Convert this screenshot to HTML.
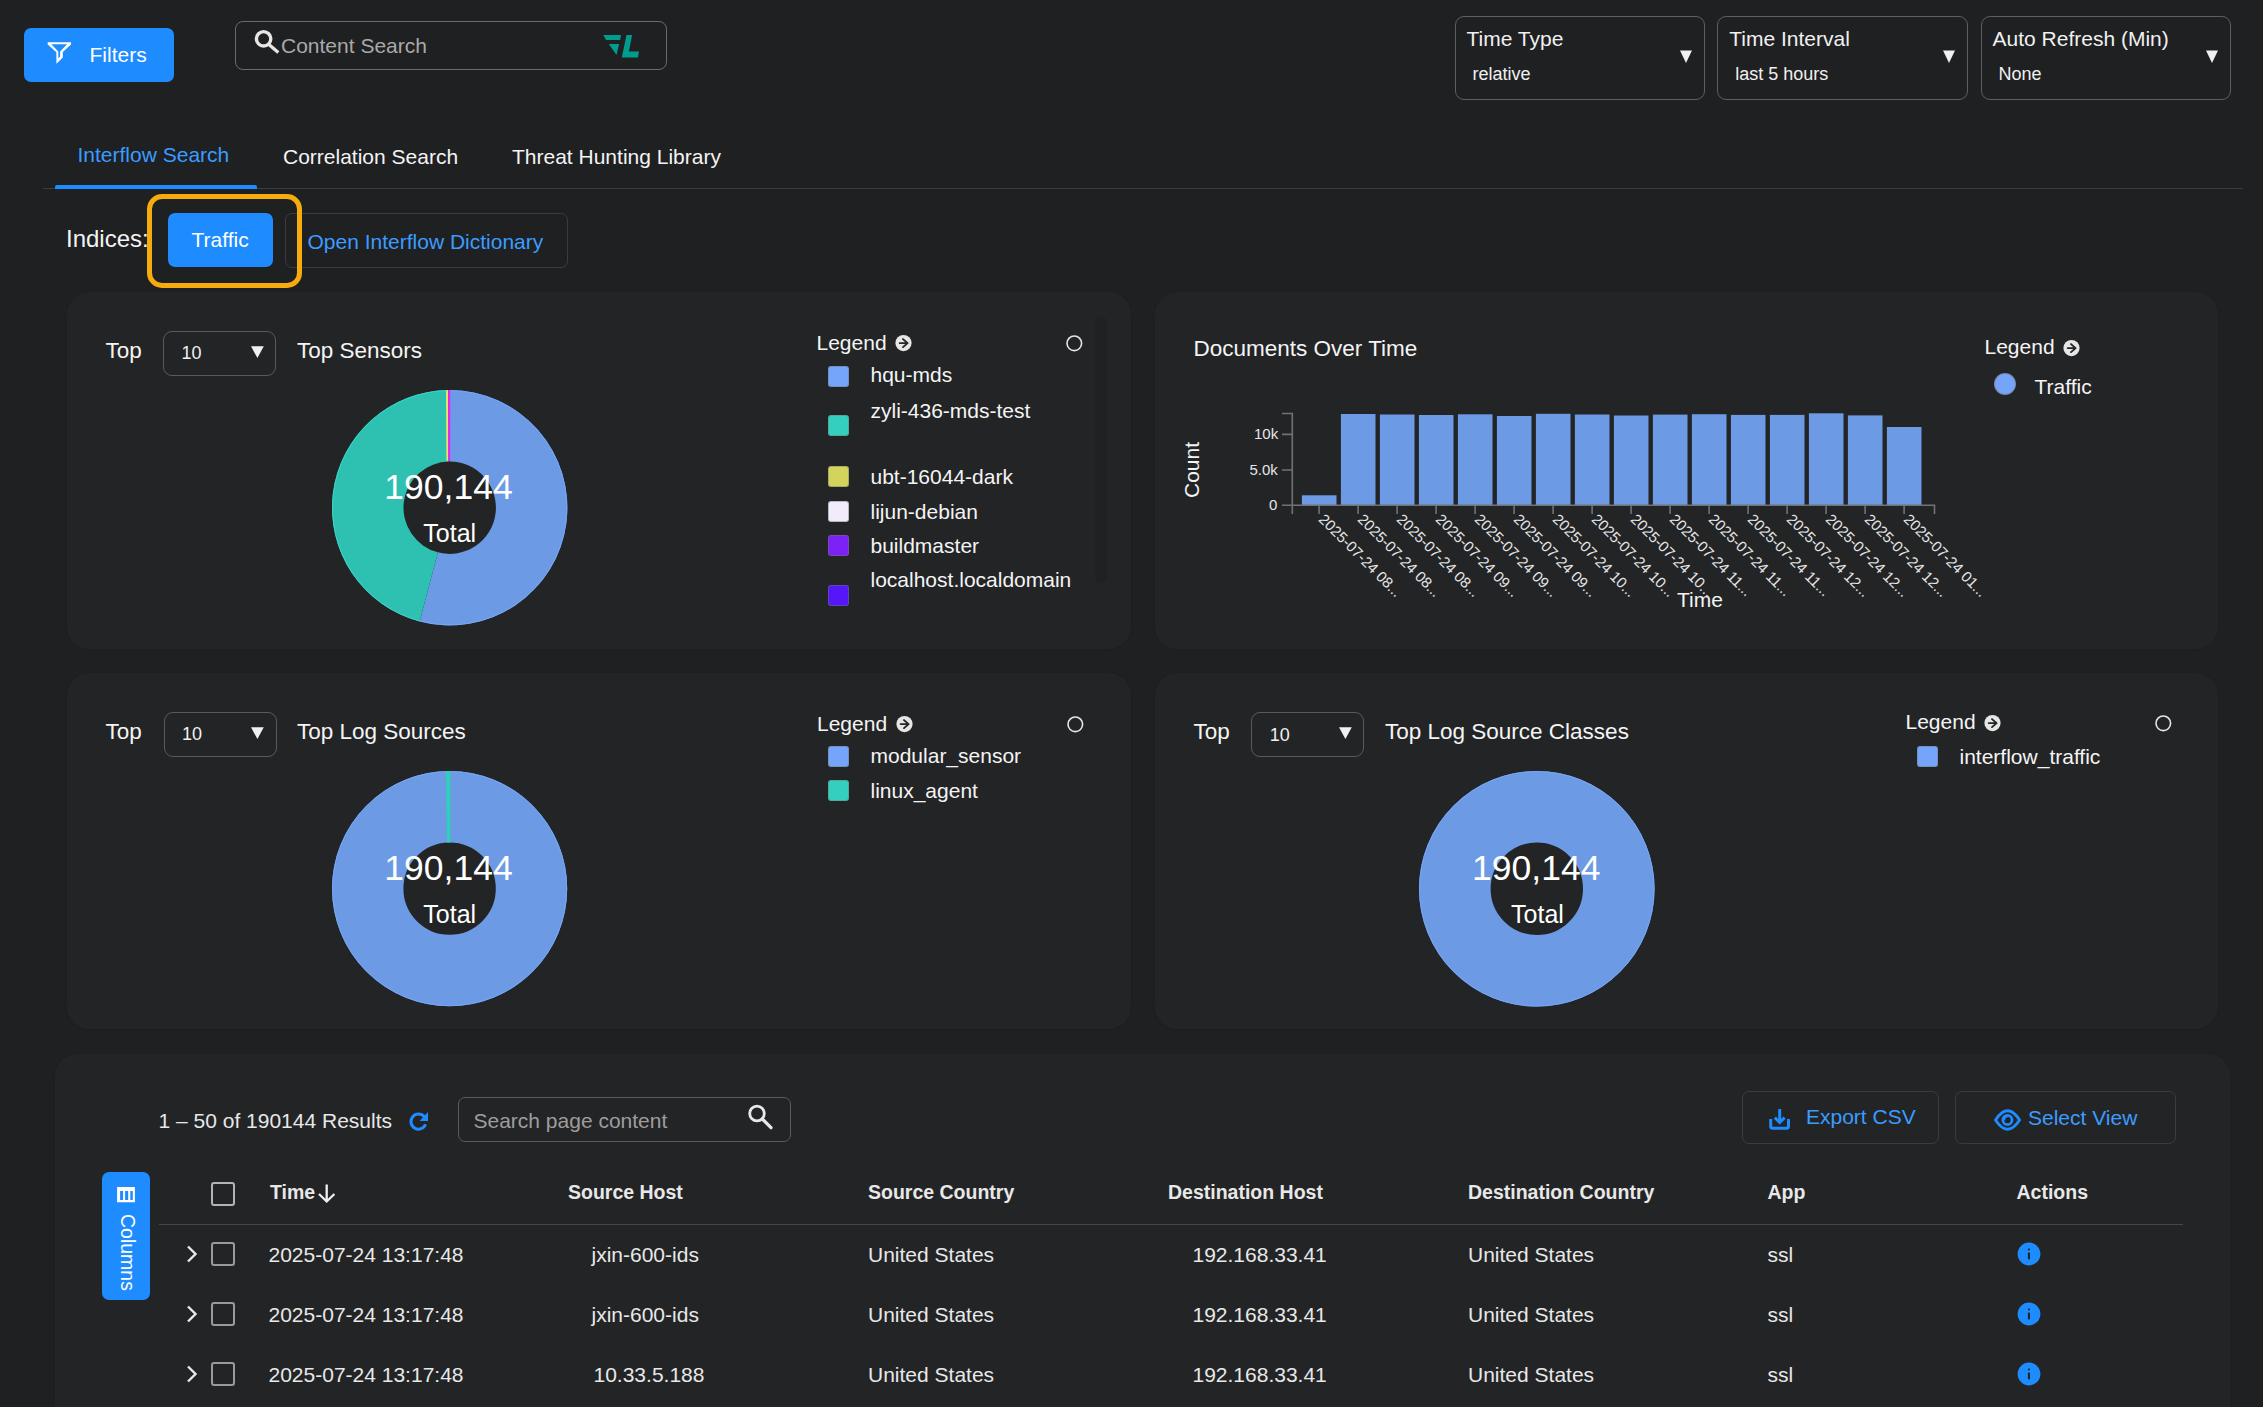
<!DOCTYPE html>
<html><head><meta charset="utf-8"><style>
html,body{margin:0;padding:0;background:#1f2022;}
#root{position:relative;width:2263px;height:1407px;overflow:hidden;background:#1f2022;font-family:"Liberation Sans",sans-serif;}
.t{position:absolute;line-height:1;white-space:nowrap;}
</style></head><body><div id="root">
<div style="position:absolute;left:24px;top:28px;width:150px;height:54px;box-sizing:border-box;background:#1e8bff;border-radius:7px"></div><svg style="position:absolute;left:0;top:0" width="2263" height="120"><path fill-rule="evenodd" fill="#fff" d="M47.7,42.2 H71 V44.5 L62.8,52 V57.5 L56.4,63.8 V52.2 L47.7,44.6 Z M51.3,44.2 H67.1 L60.1,51.4 V56.5 L58.3,58.2 V51.4 Z"/></svg><div class="t" style="left:89.5px;top:44.0px;font-size:21px;color:#ffffff;font-weight:400;">Filters</div><div style="position:absolute;left:235px;top:21px;width:432px;height:49px;box-sizing:border-box;border:1.5px solid #6b6b6b;border-radius:8px"></div><svg style="position:absolute;left:240px;top:20px" width="50" height="40"><circle cx="23.6" cy="18.8" r="7.2" fill="none" stroke="#e6e6e6" stroke-width="3.4"/><line x1="28.6" y1="24.3" x2="38.3" y2="32.5" stroke="#e6e6e6" stroke-width="3.3"/></svg><div class="t" style="left:281.0px;top:34.6px;font-size:21px;color:#a9a9a9;font-weight:400;">Content Search</div><svg style="position:absolute;left:0;top:0" width="700" height="80"><path d="M603.2,35 L621,35 L620.2,40 L606.1,40 Z" fill="#009d8f"/><path d="M608.8,43.9 L619.1,43.9 L616.5,55 Z" fill="#009d8f"/><path d="M626.5,35 L632.1,35 L628.9,51.6 L639,51.6 L637.9,57.4 L621.8,57.4 Z" fill="#009d8f"/></svg><div style="position:absolute;left:1454.5px;top:16.4px;width:250.5px;height:83.6px;box-sizing:border-box;border:1.5px solid #5f5f5f;border-radius:9px"></div><div class="t" style="left:1466.5px;top:27.5px;font-size:21px;color:#f0f0f0;font-weight:400;">Time Type</div><div class="t" style="left:1472.5px;top:65.4px;font-size:18px;color:#f0f0f0;font-weight:400;">relative</div><svg style="position:absolute;left:1680.0px;top:50px" width="13" height="14"><path d="M0,0.5 L12,0.5 L6,13 Z" fill="#f0f0f0"/></svg><div style="position:absolute;left:1717.3px;top:16.4px;width:250.5px;height:83.6px;box-sizing:border-box;border:1.5px solid #5f5f5f;border-radius:9px"></div><div class="t" style="left:1729.3px;top:27.5px;font-size:21px;color:#f0f0f0;font-weight:400;">Time Interval</div><div class="t" style="left:1735.3px;top:65.4px;font-size:18px;color:#f0f0f0;font-weight:400;">last 5 hours</div><svg style="position:absolute;left:1942.8px;top:50px" width="13" height="14"><path d="M0,0.5 L12,0.5 L6,13 Z" fill="#f0f0f0"/></svg><div style="position:absolute;left:1980.5px;top:16.4px;width:250.5px;height:83.6px;box-sizing:border-box;border:1.5px solid #5f5f5f;border-radius:9px"></div><div class="t" style="left:1992.5px;top:27.5px;font-size:21px;color:#f0f0f0;font-weight:400;">Auto Refresh (Min)</div><div class="t" style="left:1998.5px;top:65.4px;font-size:18px;color:#f0f0f0;font-weight:400;">None</div><svg style="position:absolute;left:2206.0px;top:50px" width="13" height="14"><path d="M0,0.5 L12,0.5 L6,13 Z" fill="#f0f0f0"/></svg><div class="t" style="left:77.5px;top:144.4px;font-size:21px;color:#3b9cff;font-weight:400;">Interflow Search</div><div class="t" style="left:283.0px;top:146.0px;font-size:21px;color:#f4f4f4;font-weight:400;">Correlation Search</div><div class="t" style="left:512.0px;top:146.0px;font-size:21px;color:#f4f4f4;font-weight:400;">Threat Hunting Library</div><div style="position:absolute;left:43px;top:188px;width:2200px;height:1px;box-sizing:border-box;background:#3a3b3d"></div><div style="position:absolute;left:55px;top:185px;width:202px;height:4px;box-sizing:border-box;background:#1e8bff;border-radius:2px 2px 0 0"></div><div class="t" style="left:66.0px;top:227.4px;font-size:24px;color:#f4f4f4;font-weight:400;">Indices:</div><div style="position:absolute;left:168px;top:213px;width:105px;height:54px;box-sizing:border-box;background:#1e8bff;border-radius:7px"></div><div class="t" style="left:191.5px;top:229.3px;font-size:21px;color:#ffffff;font-weight:400;">Traffic</div><div style="position:absolute;left:285px;top:213px;width:283px;height:55px;box-sizing:border-box;border:1.5px solid #3b3c3e;border-radius:7px"></div><div class="t" style="left:307.5px;top:231.0px;font-size:21px;color:#3b9cff;font-weight:400;">Open Interflow Dictionary</div><div style="position:absolute;left:147px;top:194px;width:155px;height:94px;box-sizing:border-box;border:5px solid #f6ab0e;border-radius:15px"></div><div style="position:absolute;left:67px;top:292px;width:1064px;height:357px;box-sizing:border-box;background:#232426;border-radius:22px;box-shadow:0 0 2px rgba(0,0,0,0.12)"></div><div style="position:absolute;left:1155px;top:292px;width:1063px;height:357px;box-sizing:border-box;background:#232426;border-radius:22px;box-shadow:0 0 2px rgba(0,0,0,0.12)"></div><div style="position:absolute;left:67px;top:673px;width:1064px;height:356px;box-sizing:border-box;background:#232426;border-radius:22px;box-shadow:0 0 2px rgba(0,0,0,0.12)"></div><div style="position:absolute;left:1155px;top:673px;width:1063px;height:356px;box-sizing:border-box;background:#232426;border-radius:22px;box-shadow:0 0 2px rgba(0,0,0,0.12)"></div><div style="position:absolute;left:55px;top:1054px;width:2175px;height:446px;box-sizing:border-box;background:#232426;border-radius:22px;box-shadow:0 0 2px rgba(0,0,0,0.12)"></div><div class="t" style="left:105.5px;top:340.0px;font-size:22.5px;color:#f4f4f4;font-weight:400;">Top</div><div style="position:absolute;left:163px;top:331px;width:113px;height:45px;box-sizing:border-box;border:1.5px solid #5a5a5a;border-radius:9px"></div><div class="t" style="left:181.5px;top:344.2px;font-size:18px;color:#f0f0f0;font-weight:400;">10</div><svg style="position:absolute;left:250.5px;top:345.8px" width="13" height="13"><path d="M0,0.3 L12.8,0.3 L6.4,12 Z" fill="#f0f0f0"/></svg><div class="t" style="left:297.0px;top:340.0px;font-size:22.5px;color:#f4f4f4;font-weight:400;">Top Sensors</div><svg style="position:absolute;left:329.6px;top:387.9px" width="239" height="239"><path d="M119.70,2.00 A117.7,117.7 0 1 1 89.63,233.50 L107.90,164.37 A46.2,46.2 0 1 0 119.70,73.50 Z" fill="#6c9ae4"/><path d="M119.70,2.50 A117.2,117.2 0 1 1 89.76,233.01" fill="none" stroke="#76a6f8" stroke-width="1"/><path d="M89.63,233.50 A117.7,117.7 0 0 1 118.26,2.01 L119.14,73.50 A46.2,46.2 0 0 0 107.90,164.37 Z" fill="#2ec1b2"/><path d="M89.76,233.01 A117.2,117.2 0 0 1 118.27,2.51" fill="none" stroke="#3ad6c6" stroke-width="1"/></svg><div class="t" style="left:384.3px;top:469.7px;font-size:35.5px;color:#ffffff;font-weight:400;">190,144</div><div class="t" style="left:423.3px;top:520.7px;font-size:25px;color:#ffffff;font-weight:400;">Total</div><svg style="position:absolute;left:0;top:0" width="600" height="900"><path d="M446,390.3 H448.1 V460.8 H446.4 Z" fill="#e4e46a"/><path d="M448.1,390.1 H450.2 V460.8 H448.1 Z" fill="#ee22f2"/></svg><div class="t" style="left:816.5px;top:331.5px;font-size:21px;color:#f4f4f4;font-weight:400;">Legend</div><svg style="position:absolute;left:895.0px;top:334.8px" width="20" height="20"><circle cx="8.5" cy="8.1" r="8.1" fill="#e6e6e6"/><path d="M4.7,8.1 H12.3 M8,4.1 L12.6,8.1 L8,12.1" fill="none" stroke="#232426" stroke-width="1.9" stroke-linecap="round" stroke-linejoin="round"/></svg><svg style="position:absolute;left:1066.0px;top:334.9px" width="18" height="18"><circle cx="8.3" cy="8.3" r="7.3" fill="none" stroke="#e6e6e6" stroke-width="1.6"/></svg><div style="position:absolute;left:1095px;top:316px;width:12px;height:267px;background:#202123;border-radius:6px"></div><div style="position:absolute;left:828.3px;top:365.7px;width:21.0px;height:21.0px;box-sizing:border-box;background:#74a5fb;border-radius:3px;border:1px solid rgba(120,120,120,0.45)"></div><div class="t" style="left:870.5px;top:364.4px;font-size:21px;color:#f4f4f4;font-weight:400;">hqu-mds</div><div style="position:absolute;left:828.3px;top:415.4px;width:21.0px;height:21.0px;box-sizing:border-box;background:#33d0c0;border-radius:3px;border:1px solid rgba(120,120,120,0.45)"></div><div class="t" style="left:870.5px;top:399.6px;font-size:21px;color:#f4f4f4;font-weight:400;">zyli-436-mds-test</div><div style="position:absolute;left:828.3px;top:465.9px;width:21.0px;height:21.0px;box-sizing:border-box;background:#d4d35c;border-radius:3px;border:1px solid rgba(120,120,120,0.45)"></div><div class="t" style="left:870.5px;top:466.3px;font-size:21px;color:#f4f4f4;font-weight:400;">ubt-16044-dark</div><div style="position:absolute;left:828.3px;top:500.7px;width:21.0px;height:21.000000000000057px;box-sizing:border-box;background:#f2ebfb;border-radius:3px;border:1px solid rgba(120,120,120,0.45)"></div><div class="t" style="left:870.5px;top:500.7px;font-size:21px;color:#f4f4f4;font-weight:400;">lijun-debian</div><div style="position:absolute;left:828.3px;top:534.8000000000001px;width:21.0px;height:21.0px;box-sizing:border-box;background:#7c22f6;border-radius:3px;border:1px solid rgba(120,120,120,0.45)"></div><div class="t" style="left:870.5px;top:534.7px;font-size:21px;color:#f4f4f4;font-weight:400;">buildmaster</div><div style="position:absolute;left:828.3px;top:584.6px;width:21.0px;height:21.0px;box-sizing:border-box;background:#5516f8;border-radius:3px;border:1px solid rgba(120,120,120,0.45)"></div><div class="t" style="left:870.5px;top:568.8px;font-size:21px;color:#f4f4f4;font-weight:400;">localhost.localdomain</div><div class="t" style="left:1193.5px;top:338.0px;font-size:22.5px;color:#f4f4f4;font-weight:400;">Documents Over Time</div><div class="t" style="left:1984.5px;top:336.3px;font-size:21px;color:#f4f4f4;font-weight:400;">Legend</div><svg style="position:absolute;left:2063.0px;top:339.6px" width="20" height="20"><circle cx="8.5" cy="8.1" r="8.1" fill="#e6e6e6"/><path d="M4.7,8.1 H12.3 M8,4.1 L12.6,8.1 L8,12.1" fill="none" stroke="#232426" stroke-width="1.9" stroke-linecap="round" stroke-linejoin="round"/></svg><div style="position:absolute;left:1994.3px;top:372.5px;width:22px;height:22px;border-radius:50%;background:#74a5fb;box-sizing:border-box;border:1px solid rgba(120,120,120,0.6)"></div><div class="t" style="left:2034.5px;top:376.0px;font-size:21px;color:#f4f4f4;font-weight:400;">Traffic</div><svg style="position:absolute;left:0;top:0" width="2263" height="649"><rect x="1301.90" y="495.3" width="34.6" height="10.00" fill="#6c9ae4"/><rect x="1340.90" y="414.0" width="34.6" height="91.30" fill="#6c9ae4"/><rect x="1379.90" y="414.5" width="34.6" height="90.80" fill="#6c9ae4"/><rect x="1418.90" y="415.0" width="34.6" height="90.30" fill="#6c9ae4"/><rect x="1457.90" y="414.3" width="34.6" height="91.00" fill="#6c9ae4"/><rect x="1496.90" y="416.0" width="34.6" height="89.30" fill="#6c9ae4"/><rect x="1535.90" y="413.8" width="34.6" height="91.50" fill="#6c9ae4"/><rect x="1574.90" y="414.5" width="34.6" height="90.80" fill="#6c9ae4"/><rect x="1613.90" y="415.5" width="34.6" height="89.80" fill="#6c9ae4"/><rect x="1652.90" y="414.6" width="34.6" height="90.70" fill="#6c9ae4"/><rect x="1691.90" y="414.2" width="34.6" height="91.10" fill="#6c9ae4"/><rect x="1730.90" y="414.9" width="34.6" height="90.40" fill="#6c9ae4"/><rect x="1769.90" y="414.9" width="34.6" height="90.40" fill="#6c9ae4"/><rect x="1808.90" y="413.3" width="34.6" height="92.00" fill="#6c9ae4"/><rect x="1847.90" y="415.4" width="34.6" height="89.90" fill="#6c9ae4"/><rect x="1886.90" y="427.0" width="34.6" height="78.30" fill="#6c9ae4"/><path d="M1282,413.5 H1292.3 V514 M1292.3,505.3 H1934.5 V514" fill="none" stroke="#727272" stroke-width="1.6"/><path d="M1282,434.4 H1292 M1282,470 H1292 M1282,505.3 H1292" fill="none" stroke="#727272" stroke-width="1.6"/><line x1="1319.10" y1="505" x2="1319.10" y2="514" stroke="#727272" stroke-width="1.6"/><line x1="1358.10" y1="505" x2="1358.10" y2="514" stroke="#727272" stroke-width="1.6"/><line x1="1397.10" y1="505" x2="1397.10" y2="514" stroke="#727272" stroke-width="1.6"/><line x1="1436.10" y1="505" x2="1436.10" y2="514" stroke="#727272" stroke-width="1.6"/><line x1="1475.10" y1="505" x2="1475.10" y2="514" stroke="#727272" stroke-width="1.6"/><line x1="1514.10" y1="505" x2="1514.10" y2="514" stroke="#727272" stroke-width="1.6"/><line x1="1553.10" y1="505" x2="1553.10" y2="514" stroke="#727272" stroke-width="1.6"/><line x1="1592.10" y1="505" x2="1592.10" y2="514" stroke="#727272" stroke-width="1.6"/><line x1="1631.10" y1="505" x2="1631.10" y2="514" stroke="#727272" stroke-width="1.6"/><line x1="1670.10" y1="505" x2="1670.10" y2="514" stroke="#727272" stroke-width="1.6"/><line x1="1709.10" y1="505" x2="1709.10" y2="514" stroke="#727272" stroke-width="1.6"/><line x1="1748.10" y1="505" x2="1748.10" y2="514" stroke="#727272" stroke-width="1.6"/><line x1="1787.10" y1="505" x2="1787.10" y2="514" stroke="#727272" stroke-width="1.6"/><line x1="1826.10" y1="505" x2="1826.10" y2="514" stroke="#727272" stroke-width="1.6"/><line x1="1865.10" y1="505" x2="1865.10" y2="514" stroke="#727272" stroke-width="1.6"/><line x1="1904.10" y1="505" x2="1904.10" y2="514" stroke="#727272" stroke-width="1.6"/></svg><div class="t" style="left:1254.0px;top:426.1px;font-size:15px;color:#e6e6e6;font-weight:400;">10k</div><div class="t" style="left:1249.5px;top:461.6px;font-size:15px;color:#e6e6e6;font-weight:400;">5.0k</div><div class="t" style="left:1269.0px;top:497.1px;font-size:15px;color:#e6e6e6;font-weight:400;">0</div><div class="t" style="left:1180.5px;top:498px;font-size:21px;color:#f4f4f4;transform:rotate(-90deg);transform-origin:0 0">Count</div><div class="t" style="left:1327.1px;top:510.7px;font-size:15px;color:#e6e6e6;transform:rotate(45deg);transform-origin:0 0">2025-07-24 08...</div><div class="t" style="left:1366.1px;top:510.7px;font-size:15px;color:#e6e6e6;transform:rotate(45deg);transform-origin:0 0">2025-07-24 08...</div><div class="t" style="left:1405.1px;top:510.7px;font-size:15px;color:#e6e6e6;transform:rotate(45deg);transform-origin:0 0">2025-07-24 08...</div><div class="t" style="left:1444.1px;top:510.7px;font-size:15px;color:#e6e6e6;transform:rotate(45deg);transform-origin:0 0">2025-07-24 09...</div><div class="t" style="left:1483.1px;top:510.7px;font-size:15px;color:#e6e6e6;transform:rotate(45deg);transform-origin:0 0">2025-07-24 09...</div><div class="t" style="left:1522.1px;top:510.7px;font-size:15px;color:#e6e6e6;transform:rotate(45deg);transform-origin:0 0">2025-07-24 09...</div><div class="t" style="left:1561.1px;top:510.7px;font-size:15px;color:#e6e6e6;transform:rotate(45deg);transform-origin:0 0">2025-07-24 10...</div><div class="t" style="left:1600.1px;top:510.7px;font-size:15px;color:#e6e6e6;transform:rotate(45deg);transform-origin:0 0">2025-07-24 10...</div><div class="t" style="left:1639.1px;top:510.7px;font-size:15px;color:#e6e6e6;transform:rotate(45deg);transform-origin:0 0">2025-07-24 10...</div><div class="t" style="left:1678.1px;top:510.7px;font-size:15px;color:#e6e6e6;transform:rotate(45deg);transform-origin:0 0">2025-07-24 11...</div><div class="t" style="left:1717.1px;top:510.7px;font-size:15px;color:#e6e6e6;transform:rotate(45deg);transform-origin:0 0">2025-07-24 11...</div><div class="t" style="left:1756.1px;top:510.7px;font-size:15px;color:#e6e6e6;transform:rotate(45deg);transform-origin:0 0">2025-07-24 11...</div><div class="t" style="left:1795.1px;top:510.7px;font-size:15px;color:#e6e6e6;transform:rotate(45deg);transform-origin:0 0">2025-07-24 12...</div><div class="t" style="left:1834.1px;top:510.7px;font-size:15px;color:#e6e6e6;transform:rotate(45deg);transform-origin:0 0">2025-07-24 12...</div><div class="t" style="left:1873.1px;top:510.7px;font-size:15px;color:#e6e6e6;transform:rotate(45deg);transform-origin:0 0">2025-07-24 12...</div><div class="t" style="left:1912.1px;top:510.7px;font-size:15px;color:#e6e6e6;transform:rotate(45deg);transform-origin:0 0">2025-07-24 01...</div><div class="t" style="left:1677.0px;top:588.5px;font-size:21px;color:#f4f4f4;font-weight:400;">Time</div><div class="t" style="left:105.5px;top:721.3px;font-size:22.5px;color:#f4f4f4;font-weight:400;">Top</div><div style="position:absolute;left:163.5px;top:712px;width:113.0px;height:45px;box-sizing:border-box;border:1.5px solid #5a5a5a;border-radius:9px"></div><div class="t" style="left:182.0px;top:725.2px;font-size:18px;color:#f0f0f0;font-weight:400;">10</div><svg style="position:absolute;left:251.0px;top:726.8px" width="13" height="13"><path d="M0,0.3 L12.8,0.3 L6.4,12 Z" fill="#f0f0f0"/></svg><div class="t" style="left:297.0px;top:721.3px;font-size:22.5px;color:#f4f4f4;font-weight:400;">Top Log Sources</div><svg style="position:absolute;left:329.7px;top:769.2px" width="239" height="239"><circle cx="119.6" cy="119.6" r="81.9" fill="none" stroke="#6c9ae4" stroke-width="71.39999999999999"/><circle cx="119.6" cy="119.6" r="117.1" fill="none" stroke="#76a6f8" stroke-width="1"/></svg><div class="t" style="left:384.3px;top:850.9px;font-size:35.5px;color:#ffffff;font-weight:400;">190,144</div><div class="t" style="left:423.3px;top:901.9px;font-size:25px;color:#ffffff;font-weight:400;">Total</div><svg style="position:absolute;left:0;top:0" width="600" height="900"><path d="M445.8,771 H450.4 V842.6 H447 Z" fill="#2fcfb9"/></svg><div class="t" style="left:817.0px;top:712.5px;font-size:21px;color:#f4f4f4;font-weight:400;">Legend</div><svg style="position:absolute;left:895.5px;top:715.8px" width="20" height="20"><circle cx="8.5" cy="8.1" r="8.1" fill="#e6e6e6"/><path d="M4.7,8.1 H12.3 M8,4.1 L12.6,8.1 L8,12.1" fill="none" stroke="#232426" stroke-width="1.9" stroke-linecap="round" stroke-linejoin="round"/></svg><svg style="position:absolute;left:1066.5px;top:715.9px" width="18" height="18"><circle cx="8.3" cy="8.3" r="7.3" fill="none" stroke="#e6e6e6" stroke-width="1.6"/></svg><div style="position:absolute;left:828.3px;top:746.1px;width:21.0px;height:21.0px;box-sizing:border-box;background:#74a5fb;border-radius:3px;border:1px solid rgba(120,120,120,0.45)"></div><div class="t" style="left:870.5px;top:745.4px;font-size:21px;color:#f4f4f4;font-weight:400;">modular_sensor</div><div style="position:absolute;left:828.3px;top:780.4000000000001px;width:21.0px;height:21.0px;box-sizing:border-box;background:#33d0c0;border-radius:3px;border:1px solid rgba(120,120,120,0.45)"></div><div class="t" style="left:870.5px;top:779.7px;font-size:21px;color:#f4f4f4;font-weight:400;">linux_agent</div><div class="t" style="left:1193.5px;top:721.3px;font-size:22.5px;color:#f4f4f4;font-weight:400;">Top</div><div style="position:absolute;left:1251.3px;top:712.3px;width:113.0px;height:45.0px;box-sizing:border-box;border:1.5px solid #5a5a5a;border-radius:9px"></div><div class="t" style="left:1269.8px;top:725.5px;font-size:18px;color:#f0f0f0;font-weight:400;">10</div><svg style="position:absolute;left:1338.8px;top:727.1px" width="13" height="13"><path d="M0,0.3 L12.8,0.3 L6.4,12 Z" fill="#f0f0f0"/></svg><div class="t" style="left:1385.0px;top:721.3px;font-size:22.5px;color:#f4f4f4;font-weight:400;">Top Log Source Classes</div><svg style="position:absolute;left:1417.3px;top:769.1px" width="240" height="240"><circle cx="119.8" cy="119.8" r="82.0" fill="none" stroke="#6c9ae4" stroke-width="71.6"/><circle cx="119.8" cy="119.8" r="117.3" fill="none" stroke="#76a6f8" stroke-width="1"/></svg><div class="t" style="left:1472.1px;top:851.0px;font-size:35.5px;color:#ffffff;font-weight:400;">190,144</div><div class="t" style="left:1511.1px;top:902.0px;font-size:25px;color:#ffffff;font-weight:400;">Total</div><div class="t" style="left:1905.5px;top:711.3px;font-size:21px;color:#f4f4f4;font-weight:400;">Legend</div><svg style="position:absolute;left:1984.0px;top:714.6px" width="20" height="20"><circle cx="8.5" cy="8.1" r="8.1" fill="#e6e6e6"/><path d="M4.7,8.1 H12.3 M8,4.1 L12.6,8.1 L8,12.1" fill="none" stroke="#232426" stroke-width="1.9" stroke-linecap="round" stroke-linejoin="round"/></svg><svg style="position:absolute;left:2154.5px;top:714.7px" width="18" height="18"><circle cx="8.3" cy="8.3" r="7.3" fill="none" stroke="#e6e6e6" stroke-width="1.6"/></svg><div style="position:absolute;left:1916.5px;top:746.2px;width:21.0px;height:21.0px;box-sizing:border-box;background:#74a5fb;border-radius:3px;border:1px solid rgba(120,120,120,0.45)"></div><div class="t" style="left:1959.5px;top:746.2px;font-size:21px;color:#f4f4f4;font-weight:400;">interflow_traffic</div><div class="t" style="left:158.5px;top:1110.3px;font-size:21px;color:#e8e8e8;font-weight:400;">1 – 50 of 190144 Results</div><svg style="position:absolute;left:400px;top:1100px" width="40" height="40"><path d="M24.25,16.8 A7.5,7.5 0 1 0 25.55,24.2" fill="none" stroke="#1e8bff" stroke-width="3"/><path d="M28,11.9 L28,20.9 L19.6,20.9 Z" fill="#1e8bff"/></svg><div style="position:absolute;left:458px;top:1097px;width:333px;height:45px;box-sizing:border-box;border:1.5px solid #5a5a5a;border-radius:7px"></div><div class="t" style="left:473.5px;top:1110.3px;font-size:21px;color:#9d9d9d;font-weight:400;">Search page content</div><svg style="position:absolute;left:745px;top:1103px" width="32" height="30"><circle cx="12" cy="10.5" r="7.3" fill="none" stroke="#e8e8e8" stroke-width="2.8"/><line x1="17.3" y1="16" x2="26" y2="24.7" stroke="#e8e8e8" stroke-width="3.2" stroke-linecap="round"/></svg><div style="position:absolute;left:1742px;top:1091px;width:197px;height:53px;box-sizing:border-box;border:1.5px solid #3b3c3e;border-radius:7px"></div><svg style="position:absolute;left:1760px;top:1100px" width="40" height="40"><path d="M10.7,19 V26.3 Q10.7,28.3 12.7,28.3 H26.5 Q28.5,28.3 28.5,26.3 V19" fill="none" stroke="#1e8bff" stroke-width="3"/><path d="M19.7,9 V23.5 M14.8,17.6 L19.7,22.5 L24.6,17.6" fill="none" stroke="#1e8bff" stroke-width="3"/></svg><div class="t" style="left:1806.0px;top:1106.3px;font-size:21px;color:#3b9cff;font-weight:400;">Export CSV</div><div style="position:absolute;left:1955px;top:1091px;width:221px;height:53px;box-sizing:border-box;border:1.5px solid #3b3c3e;border-radius:7px"></div><svg style="position:absolute;left:1988px;top:1100px" width="40" height="40"><path d="M7.5,20 Q19.6,1.5 31.6,20 Q19.6,38.5 7.5,20 Z" fill="none" stroke="#1e8bff" stroke-width="2.9" stroke-linejoin="round"/><circle cx="19.4" cy="20" r="4.6" fill="none" stroke="#1e8bff" stroke-width="2.8"/><path d="M15.6,20.3 A4.4,4.4 0 0 1 20.2,15.6 L20.2,17.2 A2.7,2.7 0 0 0 17.2,20.3 Z" fill="#1e8bff"/></svg><div class="t" style="left:2028.0px;top:1107.0px;font-size:21px;color:#3b9cff;font-weight:400;">Select View</div><div style="position:absolute;left:102px;top:1172px;width:48px;height:128px;box-sizing:border-box;background:#1e8bff;border-radius:7px"></div><svg style="position:absolute;left:110px;top:1180px" width="30" height="30"><path fill-rule="evenodd" fill="#fff" d="M7.1,7.1 H24.9 V22.3 H7.1 Z M10.1,11.1 H13.1 V20 H10.1 Z M15.1,11.1 H18.2 V20 H15.1 Z M20.3,11.1 H22.8 V20 H20.3 Z"/></svg><div class="t" style="left:136.8px;top:1214px;font-size:19.5px;color:#fff;transform:rotate(90deg);transform-origin:0 0">Columns</div><div style="position:absolute;left:211px;top:1182px;width:24px;height:24px;box-sizing:border-box;border:2.8px solid #b4b4b4;border-radius:3px"></div><div class="t" style="left:270.0px;top:1183.3px;font-size:19.5px;color:#e8e8e8;font-weight:700;">Time</div><svg style="position:absolute;left:315px;top:1183px" width="24" height="21"><path d="M11.7,1.5 V18.5 M4,11 L11.7,18.5 L19.4,11" fill="none" stroke="#f0f0f0" stroke-width="2.3"/></svg><div class="t" style="left:568.0px;top:1183.3px;font-size:19.5px;color:#e8e8e8;font-weight:700;">Source Host</div><div class="t" style="left:868.0px;top:1183.3px;font-size:19.5px;color:#e8e8e8;font-weight:700;">Source Country</div><div class="t" style="left:1168.0px;top:1183.3px;font-size:19.5px;color:#e8e8e8;font-weight:700;">Destination Host</div><div class="t" style="left:1468.0px;top:1183.3px;font-size:19.5px;color:#e8e8e8;font-weight:700;">Destination Country</div><div class="t" style="left:1767.5px;top:1183.3px;font-size:19.5px;color:#e8e8e8;font-weight:700;">App</div><div class="t" style="left:2016.5px;top:1183.3px;font-size:19.5px;color:#e8e8e8;font-weight:700;">Actions</div><div style="position:absolute;left:159px;top:1224px;width:2024px;height:1px;box-sizing:border-box;background:#454648"></div><svg style="position:absolute;left:183px;top:1243.5px" width="18" height="20"><path d="M5,2.5 L12.5,10 L5,17.5" fill="none" stroke="#e8e8e8" stroke-width="2.4"/></svg><div style="position:absolute;left:211px;top:1241.5px;width:24px;height:24.0px;box-sizing:border-box;border:2.8px solid #9a9a9a;border-radius:3px"></div><div class="t" style="left:268.5px;top:1243.5px;font-size:21px;color:#e8e8e8;font-weight:400;">2025-07-24 13:17:48</div><div class="t" style="left:591.5px;top:1243.5px;font-size:21px;color:#e8e8e8;font-weight:400;">jxin-600-ids</div><div class="t" style="left:868.0px;top:1243.5px;font-size:21px;color:#e8e8e8;font-weight:400;">United States</div><div class="t" style="left:1192.5px;top:1243.5px;font-size:21px;color:#e8e8e8;font-weight:400;">192.168.33.41</div><div class="t" style="left:1468.0px;top:1243.5px;font-size:21px;color:#e8e8e8;font-weight:400;">United States</div><div class="t" style="left:1767.5px;top:1243.5px;font-size:21px;color:#e8e8e8;font-weight:400;">ssl</div><svg style="position:absolute;left:2017px;top:1242.0px" width="24" height="24"><circle cx="12" cy="12" r="11.4" fill="#1e8bff"/><rect x="10.9" y="6.4" width="2.1" height="2" rx="0.8" fill="#232426"/><rect x="10.9" y="10.6" width="2.1" height="6.9" rx="0.8" fill="#232426"/></svg><svg style="position:absolute;left:183px;top:1303.5px" width="18" height="20"><path d="M5,2.5 L12.5,10 L5,17.5" fill="none" stroke="#e8e8e8" stroke-width="2.4"/></svg><div style="position:absolute;left:211px;top:1301.5px;width:24px;height:24.0px;box-sizing:border-box;border:2.8px solid #9a9a9a;border-radius:3px"></div><div class="t" style="left:268.5px;top:1303.5px;font-size:21px;color:#e8e8e8;font-weight:400;">2025-07-24 13:17:48</div><div class="t" style="left:591.5px;top:1303.5px;font-size:21px;color:#e8e8e8;font-weight:400;">jxin-600-ids</div><div class="t" style="left:868.0px;top:1303.5px;font-size:21px;color:#e8e8e8;font-weight:400;">United States</div><div class="t" style="left:1192.5px;top:1303.5px;font-size:21px;color:#e8e8e8;font-weight:400;">192.168.33.41</div><div class="t" style="left:1468.0px;top:1303.5px;font-size:21px;color:#e8e8e8;font-weight:400;">United States</div><div class="t" style="left:1767.5px;top:1303.5px;font-size:21px;color:#e8e8e8;font-weight:400;">ssl</div><svg style="position:absolute;left:2017px;top:1302.0px" width="24" height="24"><circle cx="12" cy="12" r="11.4" fill="#1e8bff"/><rect x="10.9" y="6.4" width="2.1" height="2" rx="0.8" fill="#232426"/><rect x="10.9" y="10.6" width="2.1" height="6.9" rx="0.8" fill="#232426"/></svg><svg style="position:absolute;left:183px;top:1363.5px" width="18" height="20"><path d="M5,2.5 L12.5,10 L5,17.5" fill="none" stroke="#e8e8e8" stroke-width="2.4"/></svg><div style="position:absolute;left:211px;top:1361.5px;width:24px;height:24.0px;box-sizing:border-box;border:2.8px solid #9a9a9a;border-radius:3px"></div><div class="t" style="left:268.5px;top:1363.5px;font-size:21px;color:#e8e8e8;font-weight:400;">2025-07-24 13:17:48</div><div class="t" style="left:593.5px;top:1363.5px;font-size:21px;color:#e8e8e8;font-weight:400;">10.33.5.188</div><div class="t" style="left:868.0px;top:1363.5px;font-size:21px;color:#e8e8e8;font-weight:400;">United States</div><div class="t" style="left:1192.5px;top:1363.5px;font-size:21px;color:#e8e8e8;font-weight:400;">192.168.33.41</div><div class="t" style="left:1468.0px;top:1363.5px;font-size:21px;color:#e8e8e8;font-weight:400;">United States</div><div class="t" style="left:1767.5px;top:1363.5px;font-size:21px;color:#e8e8e8;font-weight:400;">ssl</div><svg style="position:absolute;left:2017px;top:1362.0px" width="24" height="24"><circle cx="12" cy="12" r="11.4" fill="#1e8bff"/><rect x="10.9" y="6.4" width="2.1" height="2" rx="0.8" fill="#232426"/><rect x="10.9" y="10.6" width="2.1" height="6.9" rx="0.8" fill="#232426"/></svg>
</div></body></html>
